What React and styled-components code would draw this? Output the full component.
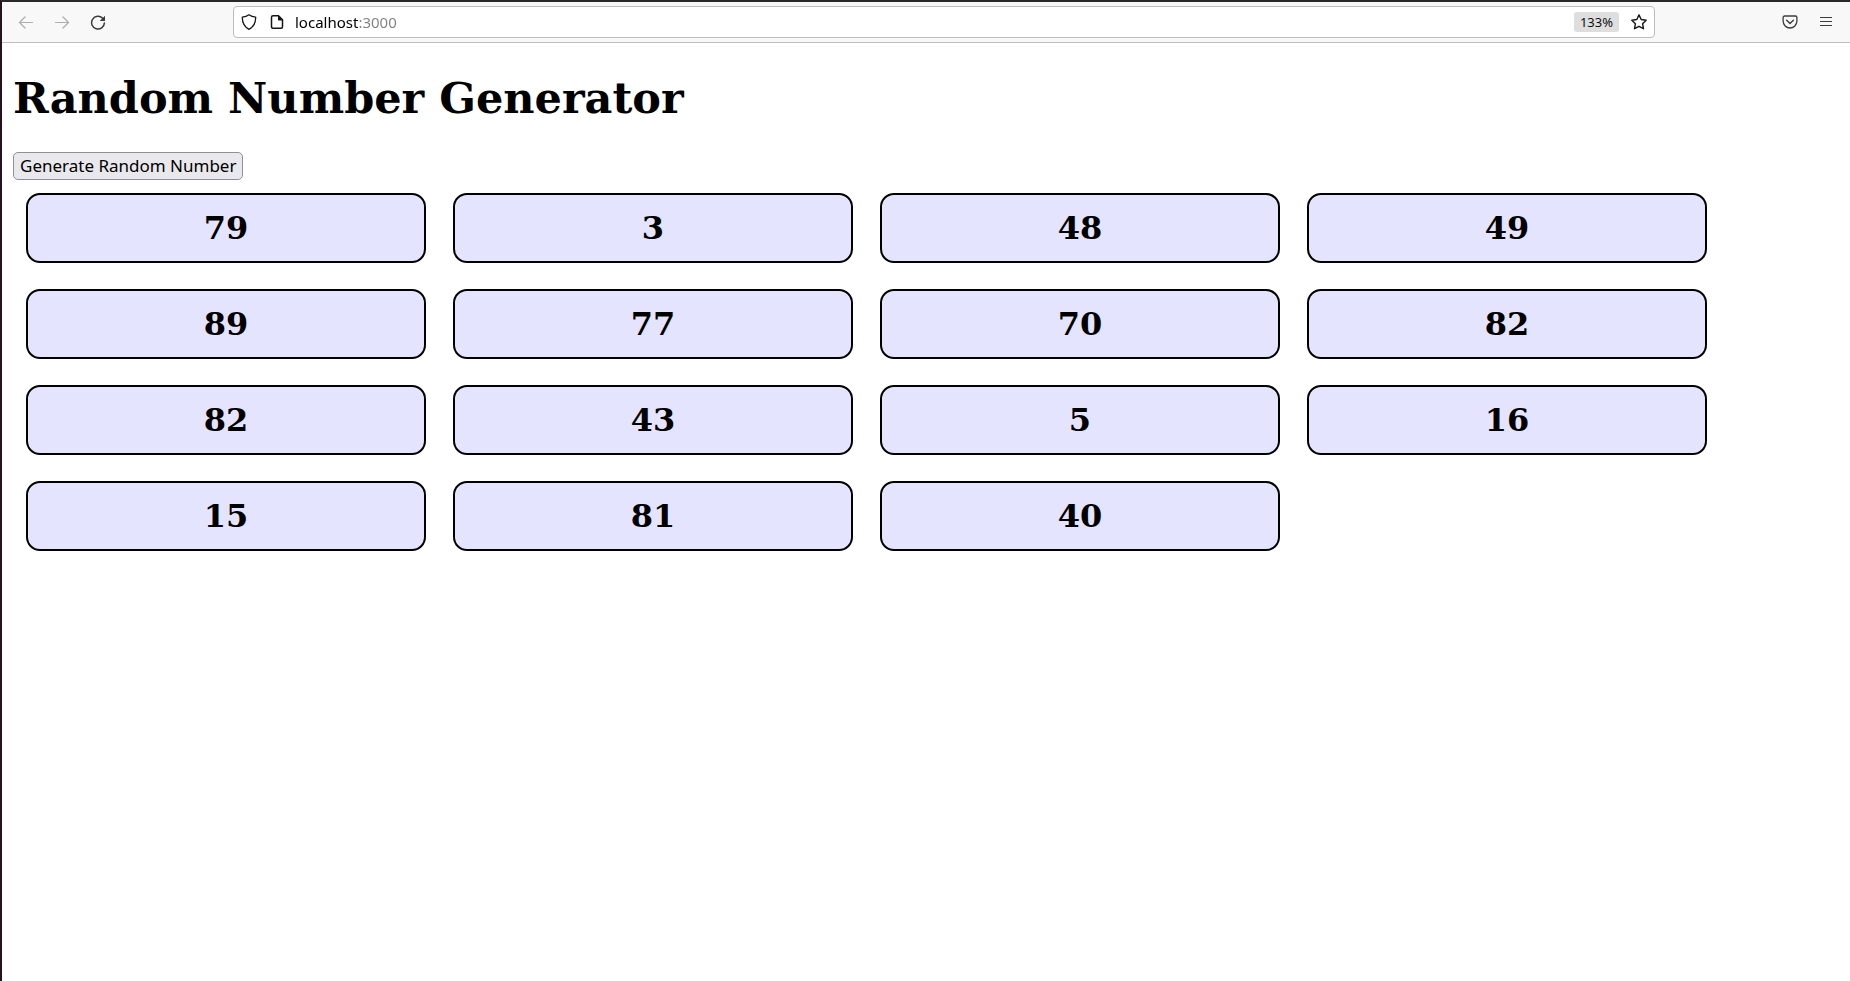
import React, { useState } from "react";
import styled, { createGlobalStyle } from "styled-components";

const GlobalStyle = createGlobalStyle`
  *, *::before, *::after { box-sizing: border-box; }
  body { margin: 0; background: #fff; }
`;

const Window = styled.div`
  min-height: 100vh;
  display: flex;
  flex-direction: column;
  border-top: 2px solid #2b2829;
  border-left: 2px solid #29101f;
  background: #fff;
  color: #000;
`;

const Toolbar = styled.header`
  height: 41px;
  flex: none;
  display: flex;
  align-items: center;
  padding: 0 6px;
  background: #f8f8f8;
  border-bottom: 1px solid #bfbfbf;
  font-family: "Noto Sans", "Open Sans", sans-serif;
`;

const ButtonGroup = styled.nav`
  display: flex;
`;

const ToolButton = styled.button`
  width: 36px;
  height: 32px;
  padding: 0;
  border: 0;
  display: grid;
  place-items: center;
  background: none;
  color: ${({ disabled }) => (disabled ? "#adadad" : "#3c3c3c")};
`;

const Spacer = styled.div`
  flex: 0 1 117px;
`;

const AddressBar = styled.form`
  flex: 1;
  min-width: 300px;
  height: 32px;
  display: flex;
  align-items: center;
  padding: 0 1px;
  background: #fff;
  border: 1px solid #bdbdbd;
  border-radius: 4px;
`;

const FieldButton = styled(ToolButton)`
  width: 28px;
  height: 28px;
  color: #151515;
`;

const Address = styled.input`
  flex: 1;
  min-width: 0;
  height: 28px;
  margin-left: 4px;
  padding: 0;
  border: 0;
  outline: 0;
  font-family: inherit;
  font-size: 15px;
  color: transparent;
  caret-color: #000;
  background: linear-gradient(to right, #000 ${({ $hostWidth }) => $hostWidth}px, #808080 ${({ $hostWidth }) => $hostWidth}px);
  background-clip: text;
  -webkit-background-clip: text;
`;

const ZoomLevel = styled.button`
  width: 45px;
  height: 20px;
  margin-right: 6px;
  padding: 0;
  border: 0;
  border-radius: 3px;
  background: #dedede;
  color: #111;
  font-family: inherit;
  font-size: 13px;
  line-height: 20px;
`;

const Page = styled.main`
  padding: 0 11px;
  font-family: "DejaVu Serif", serif;
`;

const Title = styled.h1`
  margin: 30px 0 28px;
  font-size: 43px;
  line-height: 51px;
`;

const GenerateButton = styled.button`
  display: block;
  height: 28px;
  padding: 0 6px;
  border: 1px solid #8f8f9d;
  border-radius: 5px;
  background: #e9e9ed;
  color: #000;
  font-family: "Noto Sans", "Open Sans", sans-serif;
  font-size: 17px;
  line-height: 24px;
  white-space: nowrap;
`;

const NumberList = styled.ul`
  display: flex;
  flex-wrap: wrap;
  gap: 26px 27px;
  margin: 13px 0;
  padding: 0 13px;
  list-style: none;
`;

const NumberCard = styled.li`
  width: 400px;
  padding: 14px 0;
  border: 2px solid #000;
  border-radius: 14px;
  background: #e5e4ff;
  font-size: 32px;
  font-weight: bold;
  line-height: 38px;
  text-align: center;
`;

const Icon = ({ size = 16, children }) => (
  <svg
    width={size}
    height={size}
    viewBox="0 0 16 16"
    fill="none"
    stroke="currentColor"
    strokeWidth="1.2"
    strokeLinecap="round"
    strokeLinejoin="round"
    aria-hidden="true"
  >
    {children}
  </svg>
);

const initialNumbers = [79, 3, 48, 49, 89, 77, 70, 82, 82, 43, 5, 16, 15, 81, 40];

export default function App() {
  const [numbers, setNumbers] = useState(initialNumbers);
  const addNumber = () => setNumbers([...numbers, Math.floor(Math.random() * 100)]);

  return (
    <Window>
      <GlobalStyle />
      <Toolbar>
        <ButtonGroup aria-label="History">
          <ToolButton disabled aria-label="Back">
            <Icon><path d="M14.500 8.500H1.800M7 3 1.500 8.500 7 14" /></Icon>
          </ToolButton>
          <ToolButton disabled aria-label="Forward">
            <Icon><path d="M1.500 8.500h12.700M9 3 14.500 8.500 9 14" /></Icon>
          </ToolButton>
          <ToolButton aria-label="Reload">
            <Icon>
              <path strokeWidth="1.5" d="M12.600 4.200A6.400 6.400 0 1 0 14.400 8.900" />
              <path fill="currentColor" stroke="none" d="M15 1.700v4.800a.5.5 0 0 1-.5.5H9.700z" />
            </Icon>
          </ToolButton>
        </ButtonGroup>
        <Spacer />
        <AddressBar onSubmit={(e) => e.preventDefault()}>
          <FieldButton type="button" aria-label="Tracking protection">
            <Icon>
              <path strokeWidth="1.3" d="M8 .8c2 1.400 4.200 2.100 6.700 2.400.1 5.200-1.600 9.500-6.700 12.100C2.900 12.700 1.200 8.400 1.300 3.200 3.800 2.900 6 2.200 8 .8z" />
            </Icon>
          </FieldButton>
          <FieldButton type="button" aria-label="Site information">
            <Icon>
              <path strokeWidth="1.5" d="M4 1.700h5.500l4 4v7.100a1.500 1.500 0 0 1-1.500 1.500H4a1.500 1.500 0 0 1-1.500-1.500V3.200A1.500 1.500 0 0 1 4 1.700z" />
              <path fill="currentColor" stroke="none" d="M9 1.500l5 5H9.700a.7.7 0 0 1-.7-.7z" />
            </Icon>
          </FieldButton>
          <Address aria-label="Address" defaultValue="localhost:3000" $hostWidth={63} />
          <ZoomLevel type="button">133%</ZoomLevel>
          <FieldButton type="button" aria-label="Bookmark this page">
            <Icon>
              <path strokeWidth="1.4" d="M8 .9l2.200 4.600 5 .7-3.600 3.500.9 5L8 12.300l-4.500 2.400.9-5L.8 6.200l5-.7z" />
            </Icon>
          </FieldButton>
        </AddressBar>
        <Spacer />
        <ButtonGroup aria-label="Tools">
          <ToolButton aria-label="Save to Pocket">
            <Icon>
              <path strokeWidth="1.3" d="M2.600 2h10.800a1.500 1.500 0 0 1 1.500 1.500v3.600a6.900 6.900 0 0 1-13.800 0V3.500A1.500 1.500 0 0 1 2.600 2z" />
              <path strokeWidth="1.4" d="M4.600 6.300 8 9.500l3.400-3.200" />
            </Icon>
          </ToolButton>
          <ToolButton aria-label="Menu">
            <Icon><path strokeLinecap="butt" d="M2 3.500h12M2 7.500h12M2 11.500h12" /></Icon>
          </ToolButton>
        </ButtonGroup>
      </Toolbar>
      <Page>
        <Title>Random Number Generator</Title>
        <GenerateButton onClick={addNumber}>Generate Random Number</GenerateButton>
        <NumberList>
          {numbers.map((n, i) => (
            <NumberCard key={i}>{n}</NumberCard>
          ))}
        </NumberList>
      </Page>
    </Window>
  );
}
